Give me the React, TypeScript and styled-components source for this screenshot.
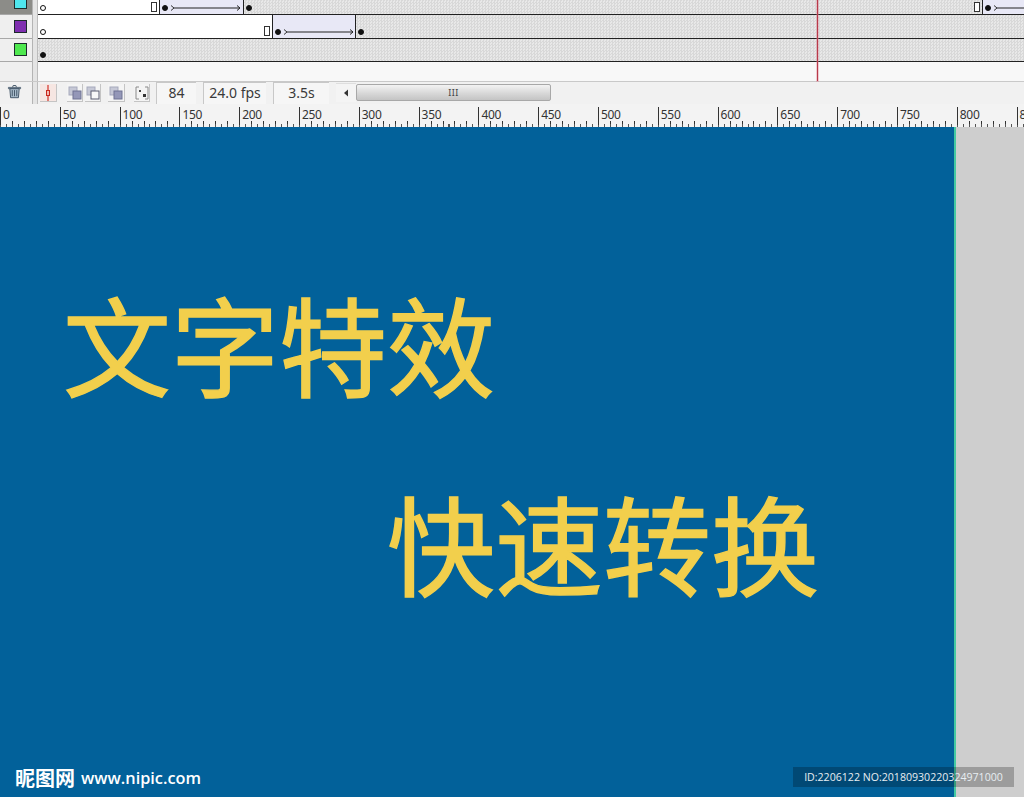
import React from "react";
import styled, { createGlobalStyle } from "styled-components";

const GlobalStyle = createGlobalStyle`
  html, body {
    margin: 0;
    padding: 0;
    overflow: hidden;
    background: #005f96;
  }
  * {
    box-sizing: border-box;
  }
`;

const UI_FONT = `"Noto Sans", "DejaVu Sans", sans-serif`;
const CJK_FONT = `"Noto Sans CJK SC", sans-serif`;

const rulerLabels = Array.from({ length: 18 }, (_, i) => i * 50);

function TweenArrow() {
  return (
    <ArrowSvg viewBox="0 0 70 8" width="70" height="8">
      <path d="M0 1.5 L3 4 L0 6.5" fill="none" stroke="#333" strokeWidth="1" />
      <path d="M3 4 H69" stroke="#222" strokeWidth="1" />
      <path d="M66 1.5 L69 4 L66 6.5" fill="none" stroke="#222" strokeWidth="1" />
    </ArrowSvg>
  );
}

function TrashIcon() {
  return (
    <svg viewBox="0 0 16 16" width="15" height="15">
      <path d="M1.5 3.6 H14.5 V5 H1.5 Z" fill="#8fa3b5" stroke="#3f5264" strokeWidth="0.8" />
      <path d="M6 3.4 L6.6 1.6 H9.4 L10 3.4" fill="none" stroke="#3f5264" strokeWidth="1" />
      <path d="M3 5 L3.8 14.6 H12.2 L13 5 Z" fill="#a9bccb" stroke="#3f5264" strokeWidth="1" />
      <path d="M5.6 6.5 V13 M8 6.5 V13 M10.4 6.5 V13" stroke="#3f5264" strokeWidth="1" />
    </svg>
  );
}

function PlayheadIcon() {
  return (
    <svg viewBox="0 0 12 16" width="12" height="16">
      <path d="M6 0 V16" stroke="#d2322a" strokeWidth="1.2" />
      <rect x="4.5" y="5.5" width="3" height="5" fill="#f2b8b0" stroke="#c8281e" strokeWidth="1" />
    </svg>
  );
}

function OnionIcon({ outline }: { outline?: boolean }) {
  return (
    <svg viewBox="0 0 14 14" width="14" height="14">
      <rect x="1" y="1" width="8" height="8" fill="#c6c8d6" stroke="#a6a9bc" strokeWidth="1" />
      <rect
        x="5"
        y="5"
        width="8"
        height="8"
        fill={outline ? "#f8f8f8" : "#9497b8"}
        stroke={outline ? "#5a5c70" : "#6f7293"}
        strokeWidth="1"
      />
    </svg>
  );
}

function MarkersIcon() {
  return (
    <svg viewBox="0 0 14 14" width="14" height="14">
      <path d="M4 1 H1 V13 H4 M10 1 H13 V13 H10" fill="none" stroke="#8a8a8a" strokeWidth="1" />
      <rect x="4" y="4" width="2" height="2" fill="#444" />
      <rect x="8" y="8" width="3" height="3" fill="#333" />
    </svg>
  );
}

export default function App() {
  return (
    <Page>
      <GlobalStyle />
      <Timeline>
        <LayerRow $height={15}>
          <LayerCell $selected>
            <Swatch $color="#4fe6ee" />
          </LayerCell>
          <Divider />
          <Frames>
            <Span $width={121} $kind="blank">
              <Dot $hollow />
              <EndFrame />
            </Span>
            <Span $width={84} $kind="tween">
              <Dot />
              <TweenArrow />
            </Span>
            <Span $width={739} $kind="hatch">
              <Dot />
              <EndFrame />
            </Span>
            <Span $width={42} $kind="tween">
              <Dot />
              <TweenArrow />
            </Span>
          </Frames>
        </LayerRow>
        <LayerRow $height={24}>
          <LayerCell>
            <Swatch $color="#7f2fb0" />
          </LayerCell>
          <Divider />
          <Frames>
            <Span $width={234} $kind="blank">
              <Dot $hollow />
              <EndFrame />
            </Span>
            <Span $width={83} $kind="tween">
              <Dot />
              <TweenArrow />
            </Span>
            <Span $width={669} $kind="hatch">
              <Dot />
            </Span>
          </Frames>
        </LayerRow>
        <LayerRow $height={23}>
          <LayerCell>
            <Swatch $color="#4fe84f" />
          </LayerCell>
          <Divider />
          <Frames>
            <Span $width={986} $kind="hatch" $flush>
              <Dot />
            </Span>
          </Frames>
        </LayerRow>
        <EmptyRow>
          <LayerCell $plain />
          <Divider />
        </EmptyRow>
        <Playhead />
      </Timeline>

      <Toolbar>
        <TrashSlot>
          <TrashIcon />
        </TrashSlot>
        <Divider />
        <ToolGroup>
          <ToolButton $width={17} $mr={10} $tint="#f6e6e2">
            <PlayheadIcon />
          </ToolButton>
          <ToolButton $width={16} $mr={2}>
            <OnionIcon />
          </ToolButton>
          <ToolButton $width={16} $mr={7}>
            <OnionIcon outline />
          </ToolButton>
          <ToolButton $width={17} $mr={9}>
            <OnionIcon />
          </ToolButton>
          <ToolButton $width={16} $mr={6}>
            <MarkersIcon />
          </ToolButton>
        </ToolGroup>
        <Field $width={40}>84</Field>
        <Field $width={63}>24.0 fps</Field>
        <Field $width={56}>3.5s</Field>
        <ScrollArrow>
          <svg viewBox="0 0 6 8" width="6" height="8">
            <path d="M5 0.5 V7.5 L1 4 Z" fill="#333" />
          </svg>
        </ScrollArrow>
        <ScrollThumb>
          <Grip>III</Grip>
        </ScrollThumb>
      </Toolbar>

      <Ruler>
        {rulerLabels.map((label) => (
          <RulerCell key={label}>{label}</RulerCell>
        ))}
      </Ruler>

      <StageWrap>
        <Stage>
          <Headline>文字特效</Headline>
          <Headline $indent={324}>快速转换</Headline>
          <Logo>
            <LogoMark>昵图网</LogoMark>
            <LogoUrl>www.nipic.com</LogoUrl>
          </Logo>
        </Stage>
        <Pasteboard />
        <Stamp>ID:2206122 NO:20180930220324971000</Stamp>
      </StageWrap>
    </Page>
  );
}

const Page = styled.div`
  position: relative;
  width: 1024px;
  height: 797px;
  overflow: hidden;
  display: flex;
  flex-direction: column;
  font-family: ${UI_FONT};
  color: #333;
`;

const Timeline = styled.div`
  position: relative;
  height: 82px;
  flex: none;
  display: flex;
  flex-direction: column;
  border-bottom: 1px solid #c9c9c9;
`;

const LayerRow = styled.div<{ $height: number }>`
  display: flex;
  height: ${(p) => p.$height}px;
  flex: none;
  overflow: hidden;
`;

const EmptyRow = styled.div`
  display: flex;
  flex: 1;
  background: #f8f8f8;
`;

const LayerCell = styled.div<{ $selected?: boolean; $plain?: boolean }>`
  width: 32px;
  flex: none;
  display: flex;
  justify-content: flex-start;
  align-items: flex-end;
  padding: 0 0 5px 14px;
  background: ${(p) => (p.$selected ? "#8c8c88" : "#efefef")};
  border-bottom: 1px solid ${(p) => (p.$plain ? "transparent" : "#a8a8a8")};
`;

const Swatch = styled.div<{ $color: string }>`
  width: 13px;
  height: 13px;
  flex: none;
  background: ${(p) => p.$color};
  border: 1px solid #1c2b2b;
`;

const Divider = styled.div`
  width: 6px;
  flex: none;
  background: #e4e4e4;
  border-left: 1px solid #b4b4b4;
  border-right: 1px solid #bcbcbc;
`;

const Frames = styled.div`
  flex: 1;
  display: flex;
  border-bottom: 1px solid #222;
`;

const Span = styled.div<{
  $width: number;
  $kind: "blank" | "tween" | "hatch";
  $flush?: boolean;
}>`
  position: relative;
  width: ${(p) => p.$width}px;
  flex: none;
  display: flex;
  align-items: flex-end;
  justify-content: space-between;
  gap: 3px;
  padding: 0 2px 2px 2px;
  background-color: ${(p) =>
    p.$kind === "blank" ? "#ffffff" : p.$kind === "tween" ? "#e8e8f6" : "#e0e0e0"};
  background-image: ${(p) =>
    p.$kind === "hatch"
      ? "repeating-conic-gradient(#d8d8d8 0 25%, #e8e8e8 0 50%)"
      : "none"};
  background-size: 3px 3px;
  border-left: ${(p) => (p.$kind === "blank" || p.$flush ? "none" : "1px solid #222")};
`;

const Dot = styled.span<{ $hollow?: boolean }>`
  width: 6px;
  height: 6px;
  flex: none;
  border-radius: 50%;
  background: ${(p) => (p.$hollow ? "#ffffff" : "#111")};
  border: 1px solid #111;
  margin-bottom: 1px;
`;

const EndFrame = styled.span`
  width: 6px;
  height: 10px;
  flex: none;
  background: #fff;
  border: 1px solid #333;
`;

const ArrowSvg = styled.svg`
  flex: none;
`;

const Playhead = styled.div`
  position: absolute;
  left: 817px;
  top: 0;
  bottom: 0;
  width: 1px;
  background: #b83a4a;
  box-shadow: 0 0 0 1px rgba(224, 120, 140, 0.35);
`;

const Toolbar = styled.div`
  height: 22px;
  flex: none;
  display: flex;
  align-items: stretch;
  background: #f1f1f1;
`;

const TrashSlot = styled.div`
  width: 32px;
  flex: none;
  display: flex;
  align-items: center;
  justify-content: flex-start;
  padding: 0 0 3px 7px;
`;

const ToolGroup = styled.div`
  display: flex;
  align-items: center;
  padding-left: 2px;
`;

const ToolButton = styled.div<{ $width: number; $mr: number; $tint?: string }>`
  width: ${(p) => p.$width}px;
  height: 18px;
  margin-right: ${(p) => p.$mr}px;
  display: flex;
  align-items: center;
  justify-content: center;
  background: ${(p) => p.$tint || "#f4f4f4"};
  border-right: 1px solid #c4c4c4;
  border-bottom: 1px solid #c4c4c4;
`;

const Field = styled.div<{ $width: number }>`
  width: ${(p) => p.$width}px;
  margin-right: 7px;
  padding-bottom: 3px;
  flex: none;
  display: flex;
  align-items: center;
  justify-content: center;
  font-size: 14px;
  color: #3a3a3a;
  background: #f6f6f6;
  border-top: 1px solid #c8c8c8;
  border-left: 1px solid #c8c8c8;
`;

const ScrollArrow = styled.div`
  width: 20px;
  flex: none;
  margin: 1px 0 2px;
  display: flex;
  align-items: center;
  justify-content: center;
  background: #f4f4f4;
  border-top: 1px solid #dedede;
`;

const ScrollThumb = styled.div`
  width: 195px;
  flex: none;
  margin: 2px 0 3px;
  display: flex;
  align-items: center;
  justify-content: center;
  background: linear-gradient(#f3f3f3, #d8d8d8 55%, #c4c4c4);
  border: 1px solid #a8a8a8;
  border-radius: 2px;
`;

const Grip = styled.span`
  font-size: 9px;
  line-height: 1;
  letter-spacing: 0.5px;
  color: #444;
`;

const Ruler = styled.div`
  height: 23px;
  flex: none;
  display: flex;
  overflow: hidden;
  background-color: #f3f3f3;
  background-image: repeating-linear-gradient(90deg, #555 0 1px, transparent 1px 5.98px),
    repeating-linear-gradient(90deg, #333 0 1px, transparent 1px 11.96px);
  background-size: 100% 3px, 100% 6px;
  background-position: 0 bottom, 0 bottom;
  background-repeat: no-repeat;
  padding-bottom: 2px;
`;

const RulerCell = styled.div`
  width: 59.8px;
  flex: none;
  margin-top: 3px;
  padding-left: 2px;
  font-size: 12px;
  line-height: 15px;
  letter-spacing: -0.3px;
  color: #333;
  border-left: 1px solid #333;
`;

const StageWrap = styled.div`
  position: relative;
  flex: 1;
  display: flex;
`;

const Stage = styled.div`
  position: relative;
  width: 956px;
  flex: none;
  background: #02619a;
  padding: 116px 0 0 63px;
  border-right: 2px solid #45c9a2;
`;

const Headline = styled.div<{ $indent?: number }>`
  margin-left: ${(p) => p.$indent || 0}px;
  font-family: ${CJK_FONT};
  font-size: 108px;
  font-weight: 400;
  -webkit-text-stroke: 1.4px #f2cf4c;
  line-height: 199px;
  height: 199px;
  color: #f2cf4c;
  white-space: nowrap;
`;

const Pasteboard = styled.div`
  flex: 1;
  background: #cecece;
`;

const Logo = styled.div`
  position: absolute;
  left: 15px;
  bottom: 7px;
  display: flex;
  align-items: center;
  gap: 6px;
  color: #fff;
`;

const LogoMark = styled.span`
  font-family: ${CJK_FONT};
  font-size: 20px;
  font-weight: 700;
  line-height: 24px;
`;

const LogoUrl = styled.span`
  font-family: "Open Sans", sans-serif;
  font-size: 16.3px;
  font-weight: 600;
  line-height: 24px;
`;

const Stamp = styled.div`
  position: absolute;
  left: 793px;
  bottom: 10px;
  width: 221px;
  height: 20px;
  display: flex;
  align-items: center;
  justify-content: center;
  font-family: "Open Sans", sans-serif;
  font-size: 10.6px;
  white-space: nowrap;
  color: #e8eef2;
  background: rgba(0, 0, 0, 0.24);
`;
